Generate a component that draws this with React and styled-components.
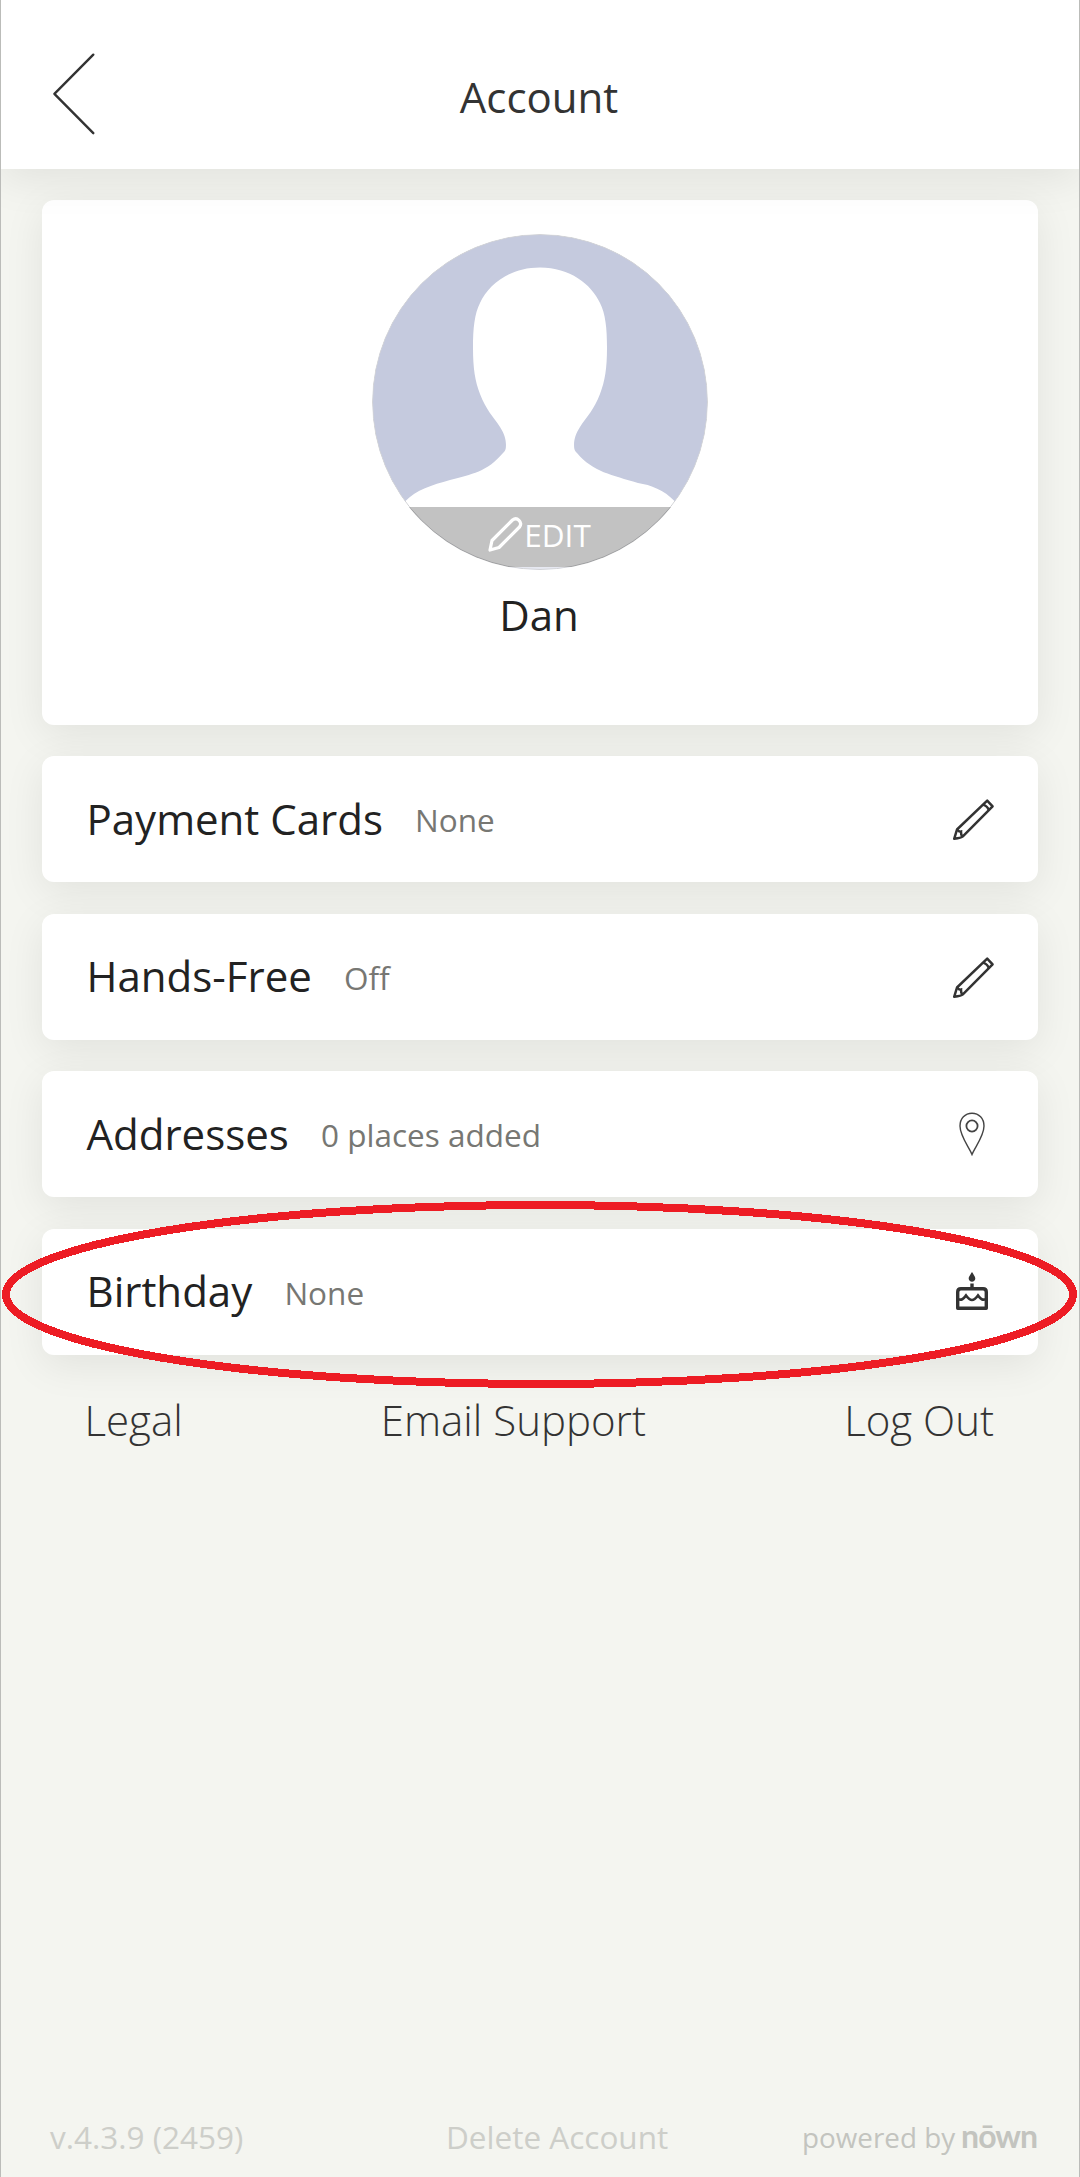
import React from "react";
import styled, { createGlobalStyle } from "styled-components";

const GlobalStyle = createGlobalStyle`
  * {
    box-sizing: border-box;
  }
  body {
    margin: 0;
    background-color: #f4f5f0;
    font-family: "Open Sans", sans-serif;
  }
`;

const Screen = styled.div`
  display: flex;
  flex-direction: column;
  height: 2177px;
  overflow: hidden;
  background-color: #f4f5f0;
  border-left: 1px solid #bbbcb9;
  border-right: 1px solid #bbbcb9;
`;

const Header = styled.header`
  display: grid;
  grid-template-columns: 160px 1fr 162px;
  align-items: center;
  flex-shrink: 0;
  height: 168.5px;
  padding-top: 26px;
  background-color: white;
  box-shadow: 0 10px 40px rgba(0, 0, 0, 0.08);
  z-index: 1;
`;

const BackButton = styled.button`
  display: flex;
  margin: -6px 0 0 50px;
  padding: 0;
  width: 44px;
  border: none;
  background: none;
`;

const Title = styled.h1`
  margin: 0;
  font-size: 42px;
  line-height: 58px;
  font-weight: 400;
  text-align: center;
  color: #333333;
`;

const Content = styled.main`
  display: flex;
  flex-direction: column;
  gap: 31.5px;
  padding: 31px 41px 0;
`;

const Card = styled.section`
  background-color: white;
  border-radius: 12px;
  box-shadow: 0 10px 40px rgba(0, 0, 0, 0.08);
`;

const ProfileCard = styled(Card)`
  display: flex;
  flex-direction: column;
  align-items: center;
  height: 525.2px;
  padding-top: 34.5px;
`;

const Avatar = styled.div`
  position: relative;
  width: 336px;
  height: 336px;
  border-radius: 50%;
  overflow: hidden;
`;

const EditBar = styled.div`
  position: absolute;
  left: 0;
  right: 0;
  bottom: 3px;
  height: 60px;
  display: flex;
  align-items: center;
  justify-content: center;
  padding: 0 1px 6px 0;
  font-size: 31.5px;
  color: white;
  background-color: rgba(0, 0, 0, 0.24);
`;

const ProfileName = styled.div`
  margin: 16px 2px 0 0;
  font-size: 42px;
  line-height: 58px;
  color: #222222;
`;

const Row = styled(Card)`
  display: flex;
  align-items: center;
  height: 126px;
  padding: 0 42px 0 44.5px;
`;

const RowLabel = styled.div`
  padding-bottom: 0.8px;
  font-size: 42px;
  line-height: 58px;
  color: #222222;
`;

const RowValue = styled.div`
  flex-grow: 1;
  margin-left: 32.2px;
  padding-top: 1.8px;
  font-size: 31.5px;
  line-height: 44px;
  color: #777773;
`;

const RowIcon = styled.div`
  display: flex;
  justify-content: center;
  width: 46px;
`;

const Links = styled.nav`
  display: flex;
  justify-content: space-between;
  margin-top: 36px;
  padding: 0 85px 0 83.5px;
`;

const LinkItem = styled.a`
  font-size: 42px;
  line-height: 58px;
  font-weight: 300;
  color: #333333;
`;

const Footer = styled.footer`
  display: flex;
  align-items: center;
  margin-top: auto;
  padding: 0 42px 18px 49px;
  font-size: 31.5px;
  line-height: 44px;
  color: #cdcec9;
`;

const Version = styled.div`
  width: 396px;
`;

const Powered = styled.div`
  margin-left: auto;
  font-size: 27.8px;
  color: #c3c4bf;
`;

const Brand = styled.span`
  margin-left: 6px;
  font-family: Lato, sans-serif;
  font-size: 32px;
  line-height: 1;
  font-weight: 700;
  letter-spacing: -1px;
`;

const Highlight = styled.svg`
  position: absolute;
  left: 0;
  top: 1200px;
  pointer-events: none;
  z-index: 2;
`;

const PencilIcon = () => (
  <svg width="44" height="44" viewBox="-2 -2 44 44" fill="none" stroke="#333" strokeWidth="2.5">
    <path d="M1.2 39.8 L4 30.5 L34.2 1.6 L39.6 7.4 L9.6 37.6 Q8.5 39 1.2 39.8 Z" strokeLinejoin="round" />
    <path d="M30 5.6 Q34.5 7 36 11.4 M4 30.5 Q6 33 8 32.6 Q7.8 35.5 9.4 37.6" />
  </svg>
);

const PinIcon = () => (
  <svg width="28" height="44" viewBox="0 0 28 44" fill="none" stroke="#444">
    <path
      d="M13 42.5 C10 35 1 24 1 14 C1 6.5 6 1.2 13 1.2 C20 1.2 25 6.5 25 14 C25 24 16 35 13 42.5 Z"
      strokeWidth="1.4"
    />
    <circle cx="13" cy="14" r="5.6" strokeWidth="1.8" />
  </svg>
);

const CakeIcon = () => (
  <svg width="34" height="39" viewBox="0 0 34 39" fill="none" stroke="#333" strokeWidth="3.4">
    <path
      d="M16 0 C18.5 4 19.3 5 19.3 6.6 C19.3 8.6 17.8 9.8 16 9.8 C14.2 9.8 12.7 8.6 12.7 6.6 C12.7 5 13.5 4 16 0 Z"
      fill="#333"
      stroke="none"
    />
    <path d="M16 11.5 V17" />
    <path d="M1.7 36.3 V20 Q1.7 16.8 4.9 16.8 H27.1 Q30.3 16.8 30.3 20 V36.3 Z" strokeLinejoin="round" />
    <path
      d="M2 27.3 C6 28.5 7 27 10 23.5 C13 27.5 14 28 16 28 C18 28 19 27.5 22 23.5 C25 27 26 28.5 30 27.3"
      strokeWidth="2.7"
    />
  </svg>
);

const rows = [
  { label: "Payment Cards", value: "None", icon: <PencilIcon /> },
  { label: "Hands-Free", value: "Off", icon: <PencilIcon /> },
  { label: "Addresses", value: "0 places added", icon: <PinIcon /> },
  { label: "Birthday", value: "None", icon: <CakeIcon /> }
];

export default function App() {
  return (
    <>
      <GlobalStyle />
      <Screen>
        <Header>
          <BackButton aria-label="Back">
            <svg width="44" height="84" viewBox="0 0 44 84" fill="none">
              <path
                d="M42.3 2.7 L3.4 41.9 L42.3 81.2"
                stroke="#333"
                strokeWidth="2.4"
                strokeLinecap="round"
                strokeLinejoin="round"
              />
            </svg>
          </BackButton>
          <Title>Account</Title>
        </Header>
        <Content>
          <ProfileCard>
            <Avatar>
              <svg width="336" height="336" viewBox="0 0 336 336">
                <circle cx="168" cy="168" r="167.5" fill="#c5cade" />
                <path
                  d="M168 33.5 C138 33.5 117 50 108 69 C102.5 80 101 94 101 114
                    C101 134 103 147 108 160 C114 176 121 182 128 193
                    C133 201 134.5 207 133.8 214 C133.5 216 133 217 131 219
                    C115 238 100 240 78 246 C60 251 44 256 33.5 267
                    L33.5 275 L80 333 H256 L302.5 275 L302.5 267
                    C292 256 279 251 266 249 C240 241 221 238 205 219
                    C203 217 202.5 216 202.2 214 C201.5 207 203 201 208 193
                    C215 182 222 176 228 160 C233 147 235 134 235 114
                    C235 94 233.5 80 228 69 C219 50 198 33.5 168 33.5 Z"
                  fill="white"
                />
                <path d="M80 333 H256 V336 H80 Z" fill="#e6e8f1" />
                <circle cx="168" cy="168" r="167.5" fill="none" stroke="#d2d3d6" />
              </svg>
              <EditBar>
                <svg width="36" height="35" viewBox="0 0 36 35" fill="none">
                  <path
                    d="M2 33 L4 23.5 L24.5 3 C29 -0.5 35 5 31.5 10 L11 30.5 Z"
                    stroke="white"
                    strokeWidth="3.2"
                    strokeLinejoin="round"
                  />
                </svg>
                EDIT
              </EditBar>
            </Avatar>
            <ProfileName>Dan</ProfileName>
          </ProfileCard>
          {rows.map((row) => (
            <Row key={row.label}>
              <RowLabel>{row.label}</RowLabel>
              <RowValue>{row.value}</RowValue>
              <RowIcon>{row.icon}</RowIcon>
            </Row>
          ))}
        </Content>
        <Links>
          <LinkItem>Legal</LinkItem>
          <LinkItem>Email Support</LinkItem>
          <LinkItem>Log Out</LinkItem>
        </Links>
        <Footer>
          <Version>v.4.3.9 (2459)</Version>
          <div>Delete Account</div>
          <Powered>
            powered by
            <Brand>nōwn</Brand>
          </Powered>
        </Footer>
      </Screen>
      <Highlight width="1080" height="190" viewBox="0 0 1080 190">
        <ellipse
          cx="539.5"
          cy="94.5"
          rx="533.5"
          ry="89.5"
          fill="none"
          stroke="#ed1c24"
          strokeWidth="8"
          shapeRendering="crispEdges"
        />
      </Highlight>
    </>
  );
}
